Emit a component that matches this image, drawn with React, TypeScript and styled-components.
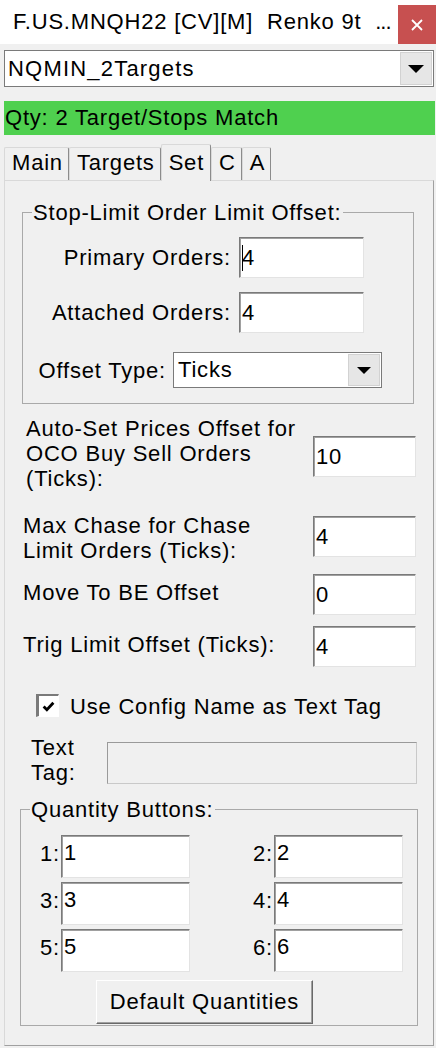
import React from "react"
import styled, { createGlobalStyle } from "styled-components"

interface Setting {
  lines: string[]
  value: string
  indent: number
  rowTop: number
  labelTop: number
  boxTop: number
}

const settings: Setting[] = [
  {
    lines: ["Auto-Set Prices Offset for", "OCO Buy Sell Orders", "(Ticks):"],
    value: "10",
    indent: 21,
    rowTop: 12,
    labelTop: 0,
    boxTop: 20,
  },
  {
    lines: ["Max Chase for Chase", "Limit Orders (Ticks):"],
    value: "4",
    indent: 18,
    rowTop: 22,
    labelTop: 0,
    boxTop: 3,
  },
  {
    lines: ["Move To BE Offset"],
    value: "0",
    indent: 18,
    rowTop: 11,
    labelTop: 6,
    boxTop: 0,
  },
  {
    lines: ["Trig Limit Offset (Ticks):"],
    value: "4",
    indent: 18,
    rowTop: 11,
    labelTop: 6,
    boxTop: 0,
  },
]

const tabs = ["Main", "Targets", "Set", "C", "A"]
const quantities = ["1", "2", "3", "4", "5", "6"]

const ArrowDown = ({ w }: { w: number }) => (
  <svg width={w} height={w / 2} viewBox="0 0 16 8">
    <polygon points="0,0 16,0 8,8" fill="#000" />
  </svg>
)

const App = () => {
  return (
    <Window>
      <GlobalStyle />
      <TitleBar>
        <TitleText>F.US.MNQH22 [CV][M]  Renko 9t  <Dots>...</Dots></TitleText>
        <CloseButton>
          <svg width="12" height="12" viewBox="0 0 12 12">
            <path d="M1 1 L11 11 M11 1 L1 11" stroke="#fff" strokeWidth="1.8" />
          </svg>
        </CloseButton>
      </TitleBar>

      <Combo $width={430} $height={37} $left={4} $top={6}>
        <ComboText $spacing={1.2} $pad={2}>NQMIN_2Targets</ComboText>
        <ComboButton>
          <ArrowDown w={16} />
        </ComboButton>
      </Combo>

      <StatusBar>Qty: 2 Target/Stops Match</StatusBar>

      <TabStrip>
        {tabs.map(t => (
          <Tab key={t} $active={t === "Set"}>
            {t}
          </Tab>
        ))}
      </TabStrip>

      <Panel>
        <GroupBox $left={17} $width={392} $top={31} $bottom={15}>
          <Legend>Stop-Limit Order Limit Offset:</Legend>
          <GroupRow $top={12}>
            <GroupLabel $width={208}>Primary Orders:</GroupLabel>
            <TextBox $width={125} $height={41} $left={8}>
              <Caret />4
            </TextBox>
          </GroupRow>
          <GroupRow $top={14}>
            <GroupLabel $width={208}>Attached Orders:</GroupLabel>
            <TextBox $width={125} $height={41} $left={8}>
              4
            </TextBox>
          </GroupRow>
          <GroupRow $top={19}>
            <GroupLabel $width={143}>Offset Type:</GroupLabel>
            <Combo $width={209} $height={36} $left={7} $top={0}>
              <ComboText $spacing={0.8} $pad={3}>Ticks</ComboText>
              <ComboButton>
                <ArrowDown w={14} />
              </ComboButton>
            </Combo>
          </GroupRow>
        </GroupBox>

        {settings.map(s => (
          <SettingRow key={s.lines[0]} $top={s.rowTop}>
            <SettingLabel $indent={s.indent} $top={s.labelTop}>
              {s.lines.map(line => (
                <div key={line}>{line}</div>
              ))}
            </SettingLabel>
            <TextBox $width={103} $height={41} $top={s.boxTop} $right={17}>
              {s.value}
            </TextBox>
          </SettingRow>
        ))}

        <CheckRow>
          <CheckBox>
            <svg width="13" height="11" viewBox="0 0 12 10">
              <path d="M1.5 5 L4.5 8 L10.5 1.5" stroke="#000" strokeWidth="2.6" fill="none" />
            </svg>
          </CheckBox>
          <CheckLabel>Use Config Name as Text Tag</CheckLabel>
        </CheckRow>

        <SettingRow $top={18}>
          <TagLabel>
            <div>Text</div>
            <div>Tag:</div>
          </TagLabel>
          <DisabledBox />
        </SettingRow>

        <GroupBox $left={15} $width={398} $top={24} $bottom={1}>
          <Legend>Quantity Buttons:</Legend>
          <QtyGrid>
            {quantities.map(q => (
              <React.Fragment key={q}>
                <QtyLabel>{q}:</QtyLabel>
                <QtyBox>{q}</QtyBox>
              </React.Fragment>
            ))}
          </QtyGrid>
          <PushButton>Default Quantities</PushButton>
        </GroupBox>
      </Panel>
    </Window>
  )
}

const GlobalStyle = createGlobalStyle`
  * {
    box-sizing: border-box;
  }

  html, body {
    margin: 0;
    padding: 0;
    background: #f0f0f0;
  }

  body {
    font-family: "Liberation Sans", Arial, sans-serif;
    font-size: 22px;
    letter-spacing: 0.8px;
    color: #000;
  }
`

const Window = styled.div`
  width: 436px;
  height: 1048px;
  overflow: hidden;
  background: #f0f0f0;
  display: flex;
  flex-direction: column;
`

const TitleBar = styled.div`
  display: flex;
  height: 44px;
  background: #fff;
`

const TitleText = styled.div`
  flex: 1;
  padding-left: 13px;
  line-height: 44px;
  white-space: pre;
`

const Dots = styled.span`
  letter-spacing: -1px;
`

const CloseButton = styled.div`
  width: 38px;
  height: 39px;
  margin-top: 5px;
  display: flex;
  align-items: center;
  justify-content: center;
  background: #c75050;
`

const Combo = styled.div<{ $width: number; $height: number; $left: number; $top: number }>`
  display: flex;
  width: ${p => p.$width}px;
  height: ${p => p.$height}px;
  margin: ${p => p.$top}px 0 0 ${p => p.$left}px;
  padding: 1px;
  background: #fff;
  border: 1px solid #7a7a7a;
`

const ComboText = styled.div<{ $spacing: number; $pad: number }>`
  flex: 1;
  display: flex;
  align-items: center;
  padding-left: ${p => p.$pad}px;
  letter-spacing: ${p => p.$spacing}px;
  white-space: nowrap;
  overflow: hidden;
`

const ComboButton = styled.div`
  width: 32px;
  display: flex;
  align-items: center;
  justify-content: center;
  background: #e6e6e6;
  border: 1px solid #d2d2d2;
`

const StatusBar = styled.div`
  width: 431px;
  height: 34px;
  margin: 14px 0 0 4px;
  padding-left: 1px;
  line-height: 34px;
  background: #4fd04f;
  white-space: nowrap;
`

const TabStrip = styled.div`
  display: flex;
  align-items: flex-end;
  height: 37px;
  margin: 9px 0 -1px 4px;
  position: relative;
  z-index: 1;
`

const Tab = styled.div<{ $active?: boolean }>`
  height: ${p => (p.$active ? 37 : 33)}px;
  margin-bottom: ${p => (p.$active ? 0 : 1)}px;
  padding: ${p => (p.$active ? "5px 6px 0 7px" : "2px 5px 0 7px")};
  line-height: 25px;
  background: #f0f0f0;
  border: 1px solid;
  border-bottom: none;
  border-color: #d9d9d9 #8c8c8c #d9d9d9 #d9d9d9;
  border-radius: 2px 2px 0 0;
  white-space: nowrap;
`

const Panel = styled.div`
  display: flex;
  flex-direction: column;
  width: 430px;
  height: 866px;
  margin-left: 4px;
  border: 1px solid;
  border-color: #d9d9d9 #a0a0a0 #a0a0a0 #d9d9d9;
`

const GroupBox = styled.div<{ $left: number; $width: number; $top: number; $bottom: number }>`
  display: flex;
  flex-direction: column;
  width: ${p => p.$width}px;
  margin: ${p => p.$top}px 0 0 ${p => p.$left}px;
  padding-bottom: ${p => p.$bottom}px;
  border: 1px solid #a9a9a9;
`

const Legend = styled.div`
  align-self: flex-start;
  margin: -13px 0 0 9px;
  padding: 0 2px 0 1px;
  line-height: 25px;
  background: #f0f0f0;
  white-space: nowrap;
`

const GroupRow = styled.div<{ $top: number }>`
  display: flex;
  align-items: center;
  margin-top: ${p => p.$top}px;
`

const GroupLabel = styled.div<{ $width: number }>`
  width: ${p => p.$width}px;
  text-align: right;
  line-height: 25px;
  white-space: nowrap;
`

const TextBox = styled.div<{ $width: number; $height: number; $left?: number; $top?: number; $right?: number }>`
  display: flex;
  align-items: center;
  flex-shrink: 0;
  width: ${p => p.$width}px;
  height: ${p => p.$height}px;
  margin: ${p => p.$top || 0}px ${p => p.$right || 0}px 0 ${p => p.$left || 0}px;
  padding-left: 2px;
  background: #fff;
  border: 1px solid;
  border-color: #7a7a7a #e3e3e3 #e3e3e3 #7a7a7a;
  box-shadow: inset 1px 1px 0 #a0a0a0;
`

const Caret = styled.span`
  width: 1px;
  height: 26px;
  margin-right: -1px;
  background: #000;
`

const SettingRow = styled.div<{ $top: number }>`
  display: flex;
  align-items: flex-start;
  margin-top: ${p => p.$top}px;
`

const SettingLabel = styled.div<{ $indent: number; $top: number }>`
  flex: 1;
  padding-left: ${p => p.$indent}px;
  margin-top: ${p => p.$top}px;
  line-height: 25px;
  white-space: nowrap;
`

const CheckRow = styled.div`
  display: flex;
  align-items: center;
  height: 23px;
  margin-top: 27px;
  padding-left: 31px;
`

const CheckBox = styled.div`
  display: flex;
  align-items: center;
  justify-content: center;
  width: 23px;
  height: 23px;
  background: #fff;
  border: 2px solid;
  border-width: 2px 1px 1px 3px;
  border-color: #7a7a7a #fff #fff #7a7a7a;
`

const CheckLabel = styled.div`
  margin: 1px 0 0 11px;
  line-height: 25px;
  white-space: nowrap;
`

const TagLabel = styled.div`
  width: 102px;
  padding-left: 26px;
  line-height: 25px;
`

const DisabledBox = styled.div`
  width: 310px;
  height: 42px;
  margin: 7px 16px 0 0;
  background: #f0f0f0;
  border: 1px solid;
  border-color: #9a9a9a #c9c9c9 #c9c9c9 #9a9a9a;
`

const QtyGrid = styled.div`
  display: grid;
  grid-template-columns: 40px 129px 84px 129px;
  grid-auto-rows: 43px;
  row-gap: 4px;
  margin-top: 13px;
`

const QtyLabel = styled.div`
  justify-self: end;
  align-self: start;
  margin-top: 6px;
  padding-right: 1px;
  line-height: 25px;
`

const QtyBox = styled.div`
  padding: 4px 0 0 2px;
  line-height: 25px;
  background: #fff;
  border: 1px solid;
  border-color: #7a7a7a #e3e3e3 #e3e3e3 #7a7a7a;
  box-shadow: inset 1px 1px 0 #a0a0a0;
`

const PushButton = styled.div`
  align-self: flex-start;
  width: 217px;
  height: 44px;
  margin: 8px 0 0 75px;
  line-height: 42px;
  text-align: center;
  background: #f0f0f0;
  border: 1px solid;
  border-color: #fff #696969 #696969 #fff;
  box-shadow: inset -1px -1px 0 #a0a0a0;
  white-space: nowrap;
`

export default App
